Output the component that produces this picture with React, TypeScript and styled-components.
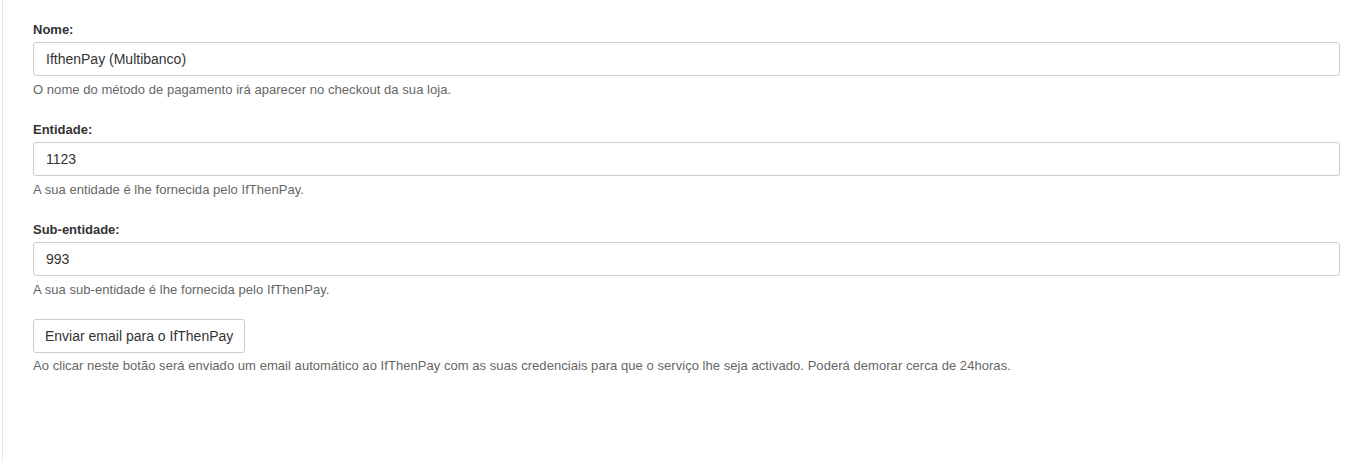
import React from "react";
import styled, { createGlobalStyle } from "styled-components";

const Global = createGlobalStyle`
  html, body { margin: 0; padding: 0; background: #fff; }
  body { font-family: "Liberation Sans", Arial, Helvetica, sans-serif; color: #333; }
  * { box-sizing: border-box; }
`;

const Panel = styled.div`
  margin-left: 2px;
  border-left: 1px solid #e6e6e6;
  min-height: 462px;
  padding: 21px 22px 0 30px;
`;

const Group = styled.div<{ $gap?: number }>`
  display: flex;
  flex-direction: column;
  margin-bottom: ${(p) => p.$gap ?? 22}px;
`;

const Label = styled.label`
  font-size: 13px;
  line-height: 18px;
  font-weight: bold;
  color: #333;
  margin-bottom: 3px;
`;

const Input = styled.input`
  height: 34px;
  width: 100%;
  border: 1px solid #ccc;
  border-radius: 3px;
  padding: 0 12px;
  font-family: inherit;
  font-size: 14px;
  color: #333;
  background: #fff;
  outline: none;
`;

const Help = styled.p<{ $top?: number }>`
  margin: ${(p) => p.$top ?? 5}px 0 0;
  font-size: 13px;
  line-height: 18px;
  letter-spacing: 0.05px;
  color: #666;
`;

const Button = styled.button`
  align-self: flex-start;
  height: 34px;
  padding: 0 11px;
  border: 1px solid #ccc;
  border-radius: 3px;
  background: #fff;
  font-family: inherit;
  font-size: 14px;
  color: #333;
  cursor: pointer;
`;

const fields = [
  { label: "Nome:", value: "IfthenPay (Multibanco)", help: "O nome do método de pagamento irá aparecer no checkout da sua loja." },
  { label: "Entidade:", value: "1123", help: "A sua entidade é lhe fornecida pelo IfThenPay." },
  { label: "Sub-entidade:", value: "993", help: "A sua sub-entidade é lhe fornecida pelo IfThenPay." },
];

export default function App() {
  return (
    <>
      <Global />
      <Panel>
        {fields.map((f, i) => (
          <Group key={f.label} $gap={i === fields.length - 1 ? 20 : 22}>
            <Label>{f.label}</Label>
            <Input defaultValue={f.value} />
            <Help>{f.help}</Help>
          </Group>
        ))}
        <Group>
          <Button>Enviar email para o IfThenPay</Button>
          <Help $top={4}>
            Ao clicar neste botão será enviado um email automático ao IfThenPay com as suas credenciais para que o serviço lhe seja activado. Poderá demorar cerca de 24horas.
          </Help>
        </Group>
      </Panel>
    </>
  );
}
